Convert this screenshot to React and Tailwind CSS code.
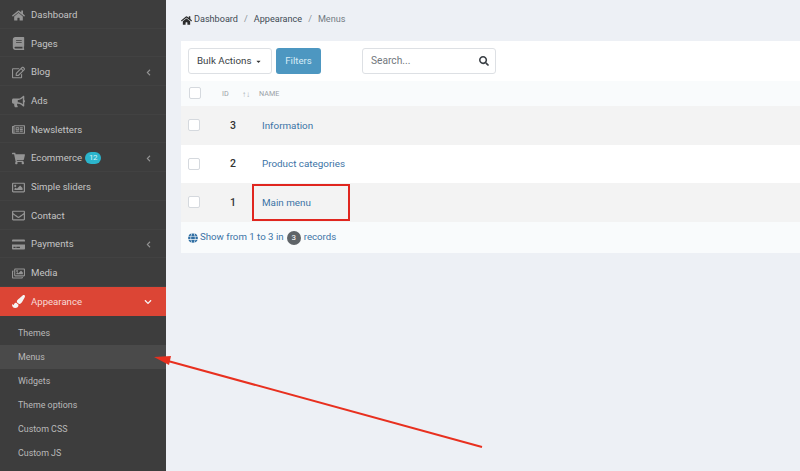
import React from 'react';
import {
    FaHome, FaBook, FaRegEdit, FaBullhorn, FaRegNewspaper, FaShoppingCart, FaRegImage, FaRegEnvelope,
    FaCreditCard, FaRegImages, FaPaintBrush, FaChevronLeft, FaChevronDown, FaGlobe, FaSearch, FaCaretDown,
} from 'react-icons/fa';

const menu = [
    { label: 'Dashboard', icon: FaHome },
    { label: 'Pages', icon: FaBook },
    { label: 'Blog', icon: FaRegEdit, arrow: true },
    { label: 'Ads', icon: FaBullhorn },
    { label: 'Newsletters', icon: FaRegNewspaper },
    { label: 'Ecommerce', icon: FaShoppingCart, arrow: true, badge: '12' },
    { label: 'Simple sliders', icon: FaRegImage },
    { label: 'Contact', icon: FaRegEnvelope },
    { label: 'Payments', icon: FaCreditCard, arrow: true },
    { label: 'Media', icon: FaRegImages },
];

const subMenu = ['Themes', 'Menus', 'Widgets', 'Theme options', 'Custom CSS', 'Custom JS'];

const rows = [
    { id: 3, name: 'Information', bg: 'bg-[#f3f3f3]' },
    { id: 2, name: 'Product categories', bg: 'bg-white' },
    { id: 1, name: 'Main menu', bg: 'bg-[#f3f3f3]' },
];

const Checkbox = () => <div className="w-[12px] h-[12px] bg-white border border-[#d5d9de] rounded-[2px]" />;

const App = () => {
    return (
        <div className="relative w-[800px] h-[471px] overflow-hidden flex bg-[#edf0f5] font-['Roboto',sans-serif]">
            <aside className="w-[166px] shrink-0 bg-[#3d3d3d] text-[#c4c4c4] text-[9.6px]">
                {menu.map(({ label, icon: Icon, arrow, badge }) => (
                    <div key={label} className="h-[28.7px] flex items-center pt-[2.4px] pl-[12px] pr-[14px] border-b border-[#424242]">
                        <Icon className="w-[13px] h-[13px] text-[#949494]" />
                        <span className="ml-[6px]">{label}</span>
                        {badge && <span className="ml-[3px] h-[12px] px-[4px] rounded-full bg-[#2bb5cc] text-[#d5f2f6] text-[8px] leading-[12px] tracking-[-0.5px]">{badge}</span>}
                        {arrow && <FaChevronLeft className="ml-auto w-[7px] h-[7px] text-[#949494]" />}
                    </div>
                ))}
                <div className="h-[29px] flex items-center pt-[1px] pl-[12px] pr-[14px] bg-[#dc4535] text-[#f7dad7]">
                    <FaPaintBrush className="w-[13px] h-[13px] text-[#f5f5f5]" />
                    <span className="ml-[6px]">Appearance</span>
                    <FaChevronDown className="ml-auto w-[8px] h-[8px] text-[#f5f5f5]" />
                </div>
                <div className="pt-[5px] text-[8.9px] text-[#b9b9b9]">
                    {subMenu.map((item) => (
                        <div key={item} className={`h-[24px] flex items-center pt-[1px] pl-[18px] ${item === 'Menus' ? 'bg-[#4a4a4a]' : ''}`}>{item}</div>
                    ))}
                </div>
            </aside>

            <main className="flex-1 pl-[15px]">
                <div className="h-[41px] flex items-center pb-[1px] text-[9.1px] text-[#3f4a54]">
                    <FaHome className="w-[11px] h-[11px] text-[#2b2b2b]" />
                    <span className="ml-[2px]">Dashboard</span>
                    <span className="mx-[6px] text-[#8a9299]">/</span>
                    <span>Appearance</span>
                    <span className="mx-[6px] text-[#8a9299]">/</span>
                    <span className="text-[#737b83]">Menus</span>
                </div>

                <section className="bg-white">
                    <div className="h-[40px] flex items-center pl-[7px]">
                        <div className="w-[84px] h-[26px] flex items-center gap-[4px] pl-[8px] border border-[#dde0e4] rounded-[3px] text-[9.8px] text-[#3a3f45]">
                            Bulk Actions
                            <FaCaretDown className="w-[7px] h-[7px] text-[#333333]" />
                        </div>
                        <div className="ml-[4px] w-[45px] h-[26px] flex items-center justify-center rounded-[3px] bg-[#4d97c1] text-[9.6px] text-[#d9ecf6]">Filters</div>
                        <div className="ml-[41px] w-[134px] h-[26px] flex items-center justify-between pl-[8px] pr-[6px] border border-[#dde0e4] rounded-[3px] text-[10.2px] text-[#71777d]">
                            Search...
                            <FaSearch className="w-[10px] h-[10px] text-[#3a3f45]" />
                        </div>
                    </div>

                    <div className="h-[25px] flex items-center pt-[2px] bg-[#f9fbfc] text-[7.2px] text-[#9aa1a7]">
                        <div className="w-[41px] pl-[8px] -mt-[3px]"><Checkbox /></div>
                        <div className="w-[20px]">ID</div>
                        <div className="w-[17px] text-[#a9b0b6] text-[8px]">↑↓</div>
                        <div>NAME</div>
                    </div>

                    {rows.map(({ id, name, bg }) => (
                        <div key={id} className={`h-[38.5px] flex items-center pt-[1px] ${bg}`}>
                            <div className="w-[49px] pl-[7px] -mt-[1px]"><Checkbox /></div>
                            <div className="w-[32px] text-[10.5px] font-medium text-[#333333]">{id}</div>
                            <div className="pt-[1px] text-[9.85px] text-[#3b73a6]">{name}</div>
                        </div>
                    ))}

                    <div className="h-[31px] flex items-center pl-[7px] pt-[1px] bg-[#f9fbfc] text-[9.7px] text-[#3b73a6]">
                        <FaGlobe className="w-[10px] h-[10px] text-[#2f6ea3]" />
                        <span className="ml-[2px]">Show from 1 to 3 in</span>
                        <span className="mx-[3px] w-[14px] h-[14px] rounded-full bg-[#5f6468] text-white text-[8px] leading-[14px] text-center">3</span>
                        <span>records</span>
                    </div>
                </section>
            </main>

            <div className="absolute left-[252px] top-[184px] w-[98px] h-[37px] border-2 border-[#e0261f]" />
            <svg className="absolute left-0 top-0 pointer-events-none" width="800" height="471">
                <line x1="482" y1="447" x2="168" y2="361" stroke="#e8301f" strokeWidth="2" />
                <polygon points="154,357 171,356 169,365" fill="#e8301f" />
            </svg>
        </div>
    );
};

export default App;
